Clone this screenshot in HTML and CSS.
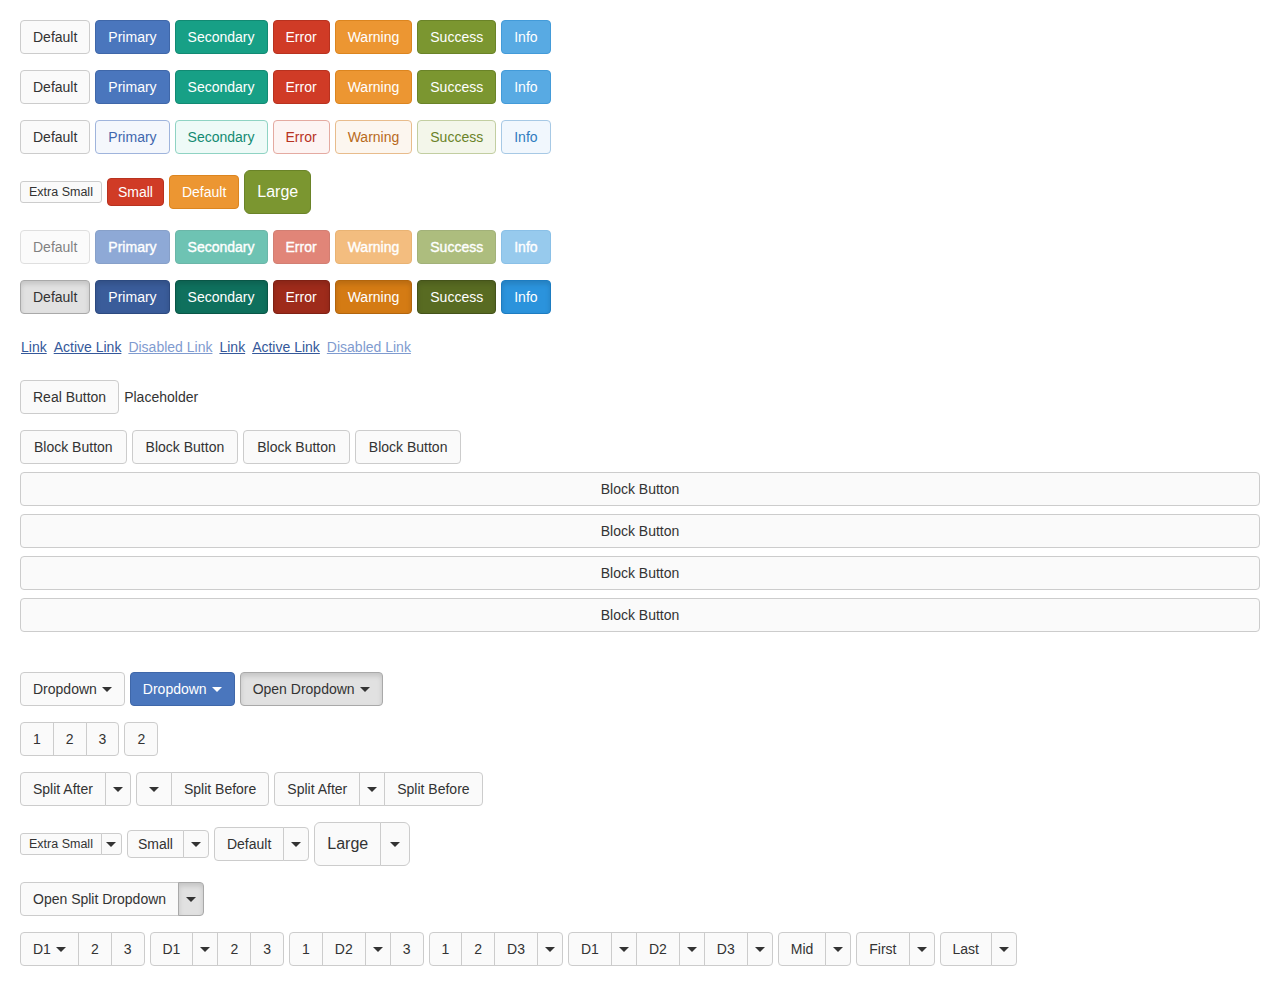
FILE: index.html
```html
<!DOCTYPE html>
<html lang="en">
<head>
<meta charset="utf-8">
<title>Buttons</title>
<link rel="stylesheet" href="styles.css">
</head>
<body>
<div class="row">
  <button class="btn">Default</button>
  <button class="btn primary">Primary</button>
  <button class="btn secondary">Secondary</button>
  <button class="btn error">Error</button>
  <button class="btn warning">Warning</button>
  <button class="btn success">Success</button>
  <button class="btn info">Info</button>
</div>
<div class="row">
  <a class="btn">Default</a>
  <a class="btn primary">Primary</a>
  <a class="btn secondary">Secondary</a>
  <a class="btn error">Error</a>
  <a class="btn warning">Warning</a>
  <a class="btn success">Success</a>
  <a class="btn info">Info</a>
</div>
<div class="row">
  <button class="btn">Default</button>
  <button class="btn o-primary">Primary</button>
  <button class="btn o-secondary">Secondary</button>
  <button class="btn o-error">Error</button>
  <button class="btn o-warning">Warning</button>
  <button class="btn o-success">Success</button>
  <button class="btn o-info">Info</button>
</div>
<div class="row">
  <button class="btn xs">Extra Small</button>
  <button class="btn sm error">Small</button>
  <button class="btn warning">Default</button>
  <button class="btn lg success">Large</button>
</div>
<div class="row">
  <button class="btn disabled">Default</button>
  <button class="btn primary disabled">Primary</button>
  <button class="btn secondary disabled">Secondary</button>
  <button class="btn error disabled">Error</button>
  <button class="btn warning disabled">Warning</button>
  <button class="btn success disabled">Success</button>
  <button class="btn info disabled">Info</button>
</div>
<div class="row">
  <button class="btn active">Default</button>
  <button class="btn primary active">Primary</button>
  <button class="btn secondary active">Secondary</button>
  <button class="btn error active">Error</button>
  <button class="btn warning active">Warning</button>
  <button class="btn success active">Success</button>
  <button class="btn info active">Info</button>
</div>
<div class="row">
  <a class="btn link">Link</a>
  <a class="btn link">Active Link</a>
  <a class="btn link link-disabled">Disabled Link</a>
  <button class="btn link">Link</button>
  <button class="btn link">Active Link</button>
  <button class="btn link link-disabled">Disabled Link</button>
</div>
<div class="row">
  <button class="btn">Real Button</button>
  <span class="placeholder">Placeholder</span>
</div>
<div class="row row-tight">
  <button class="btn wide">Block Button</button>
  <button class="btn wide">Block Button</button>
  <button class="btn wide">Block Button</button>
  <button class="btn wide">Block Button</button>
</div>
<div class="stack">
  <button class="btn block">Block Button</button>
  <button class="btn block">Block Button</button>
  <button class="btn block">Block Button</button>
  <button class="btn block">Block Button</button>
</div>
<div class="row">
  <button class="btn">Dropdown<span class="caret"></span></button>
  <button class="btn primary">Dropdown<span class="caret"></span></button>
  <button class="btn active">Open Dropdown<span class="caret"></span></button>
</div>
<div class="row">
  <div class="group">
    <button class="btn">1</button>
    <button class="btn">2</button>
    <button class="btn">3</button>
  </div>
  <div class="group">
    <button class="btn">2</button>
  </div>
</div>
<div class="row">
  <div class="group">
    <button class="btn">Split After</button>
    <button class="btn tog"><span class="caret"></span></button>
  </div>
  <div class="group">
    <button class="btn togb"><span class="caret"></span></button>
    <button class="btn">Split Before</button>
  </div>
  <div class="group">
    <button class="btn">Split After</button>
    <button class="btn tog"><span class="caret"></span></button>
    <button class="btn">Split Before</button>
  </div>
</div>
<div class="row">
  <div class="group">
    <button class="btn xs">Extra Small</button>
    <button class="btn xs tog"><span class="caret"></span></button>
  </div>
  <div class="group">
    <button class="btn sm">Small</button>
    <button class="btn sm tog"><span class="caret"></span></button>
  </div>
  <div class="group">
    <button class="btn">Default</button>
    <button class="btn tog"><span class="caret"></span></button>
  </div>
  <div class="group">
    <button class="btn lg">Large</button>
    <button class="btn lg tog"><span class="caret"></span></button>
  </div>
</div>
<div class="row">
  <div class="group">
    <button class="btn">Open Split Dropdown</button>
    <button class="btn tog active"><span class="caret"></span></button>
  </div>
</div>
<div class="row">
  <div class="group">
    <button class="btn">D1<span class="caret"></span></button>
    <button class="btn">2</button>
    <button class="btn">3</button>
  </div>
  <div class="group">
    <button class="btn">D1</button>
    <button class="btn tog"><span class="caret"></span></button>
    <button class="btn">2</button>
    <button class="btn">3</button>
  </div>
  <div class="group">
    <button class="btn">1</button>
    <button class="btn">D2</button>
    <button class="btn tog"><span class="caret"></span></button>
    <button class="btn">3</button>
  </div>
  <div class="group">
    <button class="btn">1</button>
    <button class="btn">2</button>
    <button class="btn">D3</button>
    <button class="btn tog"><span class="caret"></span></button>
  </div>
  <div class="group">
    <button class="btn">D1</button>
    <button class="btn tog"><span class="caret"></span></button>
    <button class="btn">D2</button>
    <button class="btn tog"><span class="caret"></span></button>
    <button class="btn">D3</button>
    <button class="btn tog"><span class="caret"></span></button>
  </div>
  <div class="group">
    <button class="btn">Mid</button>
    <button class="btn tog"><span class="caret"></span></button>
  </div>
  <div class="group">
    <button class="btn">First</button>
    <button class="btn tog"><span class="caret"></span></button>
  </div>
  <div class="group">
    <button class="btn">Last</button>
    <button class="btn tog"><span class="caret"></span></button>
  </div>
</div>
</body>
</html>
```
FILE: styles.css
```css
* {
  box-sizing: border-box;
}

html,
body {
  margin: 0;
}

body {
  padding: 20px;
  background: #ffffff;
  color: #333333;
  font-family: "Liberation Sans", Arial, sans-serif;
  font-size: 14px;
  line-height: 20px;
}

.row {
  display: flex;
  align-items: center;
  gap: 5px;
  margin-bottom: 16px;
}

.row-tight {
  margin-bottom: 8px;
}

.stack {
  display: flex;
  flex-direction: column;
  gap: 8px;
  margin-bottom: 40px;
}

.btn {
  display: inline-flex;
  align-items: center;
  justify-content: center;
  margin: 0;
  padding: 6px 12px;
  border: 1px solid #cccccc;
  border-radius: 4px;
  background: #fafafa;
  color: #333333;
  font-family: inherit;
  font-size: 14px;
  line-height: 20px;
  white-space: nowrap;
  text-decoration: none;
  cursor: pointer;
}

.wide {
  padding-left: 13px;
  padding-right: 13px;
}

.block {
  width: 100%;
}

.placeholder {
  color: #333333;
}

/* solid colours */
.primary {
  background: #4a76bd;
  border-color: #3f67a9;
  color: #ffffff;
}

.secondary {
  background: #17a086;
  border-color: #128a73;
  color: #ffffff;
}

.error {
  background: #d03b26;
  border-color: #b8321f;
  color: #ffffff;
}

.warning {
  background: #ec9632;
  border-color: #dc851f;
  color: #ffffff;
}

.success {
  background: #7b9630;
  border-color: #6a8328;
  color: #ffffff;
}

.info {
  background: #58aae3;
  border-color: #439bd9;
  color: #ffffff;
}

/* outline */
.o-primary {
  background: #f4f7fc;
  border-color: #9fb4dc;
  color: #3f66ae;
}

.o-secondary {
  background: #eefaf7;
  border-color: #8fd3c3;
  color: #138a72;
}

.o-error {
  background: #fdf4f3;
  border-color: #e4aaa1;
  color: #b8321f;
}

.o-warning {
  background: #fcf6ef;
  border-color: #e8bc8c;
  color: #b86a1c;
}

.o-success {
  background: #f3f6ea;
  border-color: #c2cea1;
  color: #6a8328;
}

.o-info {
  background: #f1f7fd;
  border-color: #a7c9e5;
  color: #2f7cc0;
}

/* sizes */
.xs {
  padding: 1px 8px;
  font-size: 12.5px;
  line-height: 18px;
  border-radius: 3px;
}

.sm {
  padding: 3px 10px;
  border-radius: 4px;
}

.lg {
  padding: 10px 12px;
  font-size: 16px;
  line-height: 22px;
  border-radius: 6px;
}

/* disabled */
.disabled {
  opacity: 0.62;
  cursor: default;
}

.primary.disabled,
.secondary.disabled,
.error.disabled,
.warning.disabled,
.success.disabled,
.info.disabled {
  -webkit-text-stroke: 0.35px #ffffff;
}

/* active */
.active {
  background: #e1e1e1;
  border-color: #a9a9a9;
  box-shadow: inset 0 3px 5px rgba(0, 0, 0, 0.13);
}

.primary.active {
  background: #3a5c9a;
  border-color: #2c4a80;
}

.secondary.active {
  background: #0f705d;
  border-color: #0a5647;
}

.error.active {
  background: #9e2b1b;
  border-color: #7f2114;
}

.warning.active {
  background: #d47b14;
  border-color: #b2650d;
}

.success.active {
  background: #586b22;
  border-color: #44531a;
}

.info.active {
  background: #2b93dc;
  border-color: #1d7cc1;
}

/* links */
.link {
  padding: 6px 0;
  border-color: transparent;
  background: transparent;
  color: #35589a;
  text-decoration: underline;
}

.link-disabled {
  color: #7f9bcf;
}

/* caret */
.caret {
  display: inline-block;
  width: 0;
  height: 0;
  margin-left: 5px;
  border-top: 5px solid currentColor;
  border-left: 5px solid transparent;
  border-right: 5px solid transparent;
}

.tog,
.togb {
  padding-left: 7px;
  padding-right: 7px;
}

.togb {
  padding-left: 12px;
  padding-right: 12px;
}

.tog .caret,
.togb .caret {
  margin-left: 0;
}

.xs.tog {
  padding-left: 4.5px;
  padding-right: 4.5px;
}

.lg.tog {
  padding-left: 9px;
  padding-right: 9px;
}

/* groups */
.group {
  display: flex;
}

.group > .btn {
  border-radius: 0;
}

.group > .btn + .btn {
  margin-left: -1px;
}

.group > .btn:first-child {
  border-top-left-radius: 4px;
  border-bottom-left-radius: 4px;
}

.group > .btn:last-child {
  border-top-right-radius: 4px;
  border-bottom-right-radius: 4px;
}

.group > .xs:first-child {
  border-top-left-radius: 3px;
  border-bottom-left-radius: 3px;
}

.group > .xs:last-child {
  border-top-right-radius: 3px;
  border-bottom-right-radius: 3px;
}

.group > .lg:first-child {
  border-top-left-radius: 6px;
  border-bottom-left-radius: 6px;
}

.group > .lg:last-child {
  border-top-right-radius: 6px;
  border-bottom-right-radius: 6px;
}
```
